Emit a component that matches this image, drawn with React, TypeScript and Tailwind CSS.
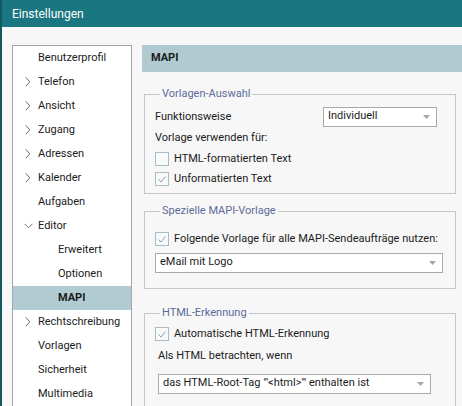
import React from "react";

type Node = { label: string; level: 0 | 1; chevron?: "right" | "down"; active?: boolean };

const tree: Node[] = [
  { label: "Benutzerprofil", level: 0 },
  { label: "Telefon", level: 0, chevron: "right" },
  { label: "Ansicht", level: 0, chevron: "right" },
  { label: "Zugang", level: 0, chevron: "right" },
  { label: "Adressen", level: 0, chevron: "right" },
  { label: "Kalender", level: 0, chevron: "right" },
  { label: "Aufgaben", level: 0 },
  { label: "Editor", level: 0, chevron: "down" },
  { label: "Erweitert", level: 1 },
  { label: "Optionen", level: 1 },
  { label: "MAPI", level: 1, active: true },
  { label: "Rechtschreibung", level: 0, chevron: "right" },
  { label: "Vorlagen", level: 0 },
  { label: "Sicherheit", level: 0 },
  { label: "Multimedia", level: 0 },
];

function Chevron({ dir }: { dir: "right" | "down" }) {
  if (dir === "down") {
    return (
      <svg width="9" height="6" viewBox="0 0 9 6" className="ml-[-1px]">
        <polyline points="0.5,0.8 4.5,4.8 8.5,0.8" fill="none" stroke="#6f6f6f" strokeWidth="1" />
      </svg>
    );
  }
  return (
    <svg width="6" height="10" viewBox="0 0 6 10">
      <polyline points="0.8,0.5 4.8,4.8 0.8,9.2" fill="none" stroke="#6f6f6f" strokeWidth="1" />
    </svg>
  );
}

function Checkbox({ checked, label }: { checked?: boolean; label: string }) {
  return (
    <div className="flex h-[20px] items-center gap-[5px]">
      <div className="flex h-[14px] w-[14px] items-center justify-center border border-[#a9bcc4] bg-[#f7f9fa]">
        {checked && (
          <svg width="12" height="12" viewBox="0 0 12 12">
            <polyline points="2.5,6.5 5,9 9.5,3.5" fill="none" stroke="#86a3ad" strokeWidth="1" />
          </svg>
        )}
      </div>
      <span>{label}</span>
    </div>
  );
}

function Select({ value, className }: { value: string; className: string }) {
  return (
    <div className={`flex h-[20px] items-center justify-between border border-[#a8a8a8] bg-white pl-[4px] pr-[6px] ${className}`}>
      <span className="mt-[-2px]">{value}</span>
      <svg width="7" height="4" viewBox="0 0 7 4">
        <polygon points="0,0 7,0 3.5,4" fill="#a6a6a6" />
      </svg>
    </div>
  );
}

function Group({ title, className, children }: { title: string; className: string; children: React.ReactNode }) {
  return (
    <fieldset className={`ml-[2px] w-[312px] border border-[#c6c6c6] ${className}`}>
      <legend className="ml-[5px] px-[2px] leading-[16px] text-[#5d6b99]">{title}</legend>
      {children}
    </fieldset>
  );
}

export default function App() {
  return (
    <div className="flex h-[406px] w-[462px] flex-col overflow-hidden border-l-2 border-[#115a62] bg-[#f7f7f7] font-['Roboto','Liberation_Sans',sans-serif] text-[11px] text-[#1b1b1b]">
      <div className="flex h-[27px] shrink-0 items-center bg-[#1a7680] pl-[10px] text-[12px] text-white">
        Einstellungen
      </div>

      <div className="flex flex-1 gap-[10px] pl-[10px] pt-[18px]">
        {/* Navigation tree */}
        <div className="h-[400px] w-[120px] shrink-0 border border-[#a6a6a6] bg-white">
          {tree.map((n) => (
            <div
              key={n.label}
              className={`flex h-[24px] items-center ${n.active ? "bg-[#b1cbd2] font-bold" : ""} ${
                n.level === 1 ? "pl-[45px]" : "pl-[12px]"
              }`}
            >
              {n.level === 0 && <div className="flex w-[13px] items-center">{n.chevron && <Chevron dir={n.chevron} />}</div>}
              <span>{n.label}</span>
            </div>
          ))}
        </div>

        {/* Page */}
        <div className="flex w-[320px] shrink-0 flex-col">
          <div className="flex h-[27px] items-center bg-[#afcad1] pl-[9px] font-bold">MAPI</div>

          <Group title="Vorlagen-Auswahl" className="mt-[14px] pb-[4px] pl-[10px] pr-[18px]">
            <div className="mt-[5px] flex h-[20px] items-center justify-between">
              <span>Funktionsweise</span>
              <Select value="Individuell" className="w-[114px]" />
            </div>
            <div className="mt-[3px] leading-[16px]">Vorlage verwenden für:</div>
            <div className="mt-[3px]">
              <Checkbox label="HTML-formatierten Text" />
              <Checkbox checked label="Unformatierten Text" />
            </div>
          </Group>

          <Group title="Spezielle MAPI-Vorlage" className="mt-[9px] pb-[15px] pl-[10px] pr-[12px]">
            <div className="mt-[10px]">
              <Checkbox checked label="Folgende Vorlage für alle MAPI-Sendeaufträge nutzen:" />
            </div>
            <Select value="eMail mit Logo" className="mt-[4px]" />
          </Group>

          <Group title="HTML-Erkennung" className="mt-[16px] pb-[16px] pl-[10px] pr-[24px]">
            <div className="mt-[3px]">
              <Checkbox checked label="Automatische HTML-Erkennung" />
            </div>
            <div className="ml-[3px] mt-[4px] leading-[16px]">Als HTML betrachten, wenn</div>
            <Select value={'das HTML-Root-Tag "\'<html>\'" enthalten ist'} className="ml-[3px] mt-[10px]" />
          </Group>
        </div>
      </div>
    </div>
  );
}
